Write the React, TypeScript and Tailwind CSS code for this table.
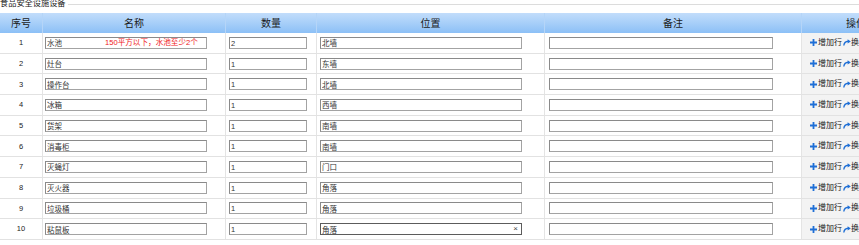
import React from 'react';

const rows = [
  { name: '水池', qty: '2', pos: '北墙' },
  { name: '灶台', qty: '1', pos: '东墙' },
  { name: '操作台', qty: '1', pos: '北墙' },
  { name: '冰箱', qty: '1', pos: '西墙' },
  { name: '货架', qty: '1', pos: '南墙' },
  { name: '消毒柜', qty: '1', pos: '南墙' },
  { name: '灭蝇灯', qty: '1', pos: '门口' },
  { name: '灭火器', qty: '1', pos: '角落' },
  { name: '垃圾桶', qty: '1', pos: '角落' },
  { name: '粘鼠板', qty: '1', pos: '角落' },
];

const cols = 'grid grid-cols-[43px_183px_91px_228px_257px_108px]';

function Field({ value, width, focused }: { value: string; width: string; focused?: boolean }) {
  return (
    <div
      className={`relative h-[12px] ${width} border bg-white ${
        focused ? 'border-[#5c5c5c]' : 'border-[#a3a3a3] border-t-[#8a8a8a] border-l-[#8a8a8a]'
      }`}
    >
      <input
        readOnly
        value={value}
        className="w-full h-full px-[1px] text-[7.5px] leading-[10px] text-[#333] outline-none bg-transparent"
      />
      {focused && (
        <span className="absolute right-[3px] top-[-1px] text-[8px] leading-[12px] text-[#444]">×</span>
      )}
    </div>
  );
}

function PlusIcon() {
  return (
    <svg width="7" height="7" viewBox="0 0 7 7" className="shrink-0">
      <path d="M2.6 0h1.8v2.6H7v1.8H4.4V7H2.6V4.4H0V2.6h2.6z" fill="#1f6fd6" />
    </svg>
  );
}

function SwapIcon() {
  return (
    <svg width="8" height="7" viewBox="0 0 8 7" className="shrink-0">
      <path d="M0.8 6.5 C1.2 3.6 3 2.4 5.2 2.3" stroke="#1f6fd6" strokeWidth="1.4" fill="none" />
      <path d="M4.6 0.2 L7.8 2.4 L4.6 4.4 z" fill="#1f6fd6" />
    </svg>
  );
}

export default function App() {
  return (
    <div
      className="w-[859px] h-[245px] overflow-hidden bg-white text-[#222]"
      style={{ fontFamily: '"Liberation Sans", "Noto Sans CJK SC", sans-serif' }}
    >
      <div className="flex items-center h-[10px] -mt-[1px]">
        <span className="text-[8.2px] leading-[10px] text-[#222] whitespace-nowrap">食品安全设施设备</span>
        <div className="flex-1 ml-[2px] border-t border-[#dcdcdc]" />
      </div>
      <div className="mt-[4px] w-[910px]">
        <div className={`${cols} h-[20px] bg-gradient-to-b from-[#c2ddfb] to-[#8cc0f6] text-[10px] text-[#1b1b1b]`}>
          {['序号', '名称', '数量', '位置', '备注', '操作'].map((h, i) => (
            <div
              key={h}
              className={`flex items-center justify-center ${i < 5 ? 'border-r border-[#b5d5f8]' : ''}`}
            >
              {h}
            </div>
          ))}
        </div>
        {rows.map((r, i) => (
          <div key={i} className={`${cols} h-[20.7px] border-b border-[#e2e2e2] text-[7.5px]`}>
            <div className="flex items-center justify-center border-r border-[#e4e4e4]">{i + 1}</div>
            <div className="relative flex items-center pl-[2px] border-r border-[#e4e4e4]">
              <Field value={r.name} width="w-[162px]" />
              {i === 0 && (
                <span className="absolute left-[62px] top-[5px] text-[7.6px] leading-[10px] text-[#f01818] whitespace-nowrap">
                  150平方以下，水池至少2个
                </span>
              )}
            </div>
            <div className="flex items-center pl-[3px] border-r border-[#e4e4e4]">
              <Field value={r.qty} width="w-[78px]" />
            </div>
            <div className="flex items-center pl-[3px] border-r border-[#e4e4e4]">
              <Field value={r.pos} width="w-[202px]" focused={i === 9} />
            </div>
            <div className="flex items-center pl-[4px] border-r border-[#e4e4e4]">
              <Field value="" width="w-[224px]" />
            </div>
            <div className="flex items-center pl-[8px] bg-[#f3f3f3] text-[8px] text-[#222] whitespace-nowrap">
              <PlusIcon />
              <span className="ml-[1px]">增加行</span>
              <span className="ml-[1px]"><SwapIcon /></span>
              <span>换行</span>
            </div>
          </div>
        ))}
      </div>
    </div>
  );
}
